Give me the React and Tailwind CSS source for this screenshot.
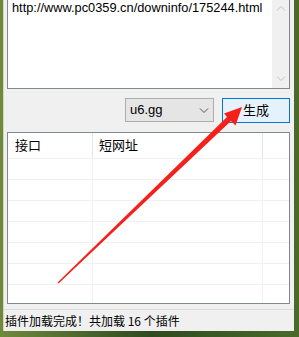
import React from "react";

const font = { fontFamily: '"Liberation Sans", "Noto Sans CJK SC", sans-serif' };

function Chevron({ dir = "down", className = "" }) {
  const d = dir === "down" ? "M1 1.5 L5 5.5 L9 1.5" : "M1 5.5 L5 1.5 L9 5.5";
  return (
    <svg width="10" height="7" viewBox="0 0 10 7" className={className}>
      <path d={d} fill="none" stroke="currentColor" strokeWidth="1" />
    </svg>
  );
}

export default function App() {
  const rows = [0, 1, 2, 3, 4, 5, 6];
  return (
    <div
      className="relative w-[299px] h-[337px] overflow-hidden bg-[linear-gradient(90deg,#6f8a3a_0%,#2f4a20_50%,#4a6a2a_100%)] text-[12px] text-black"
      style={font}
    >
      <div className="ml-[3px] w-[291px] h-[331px] bg-[#f0f0f0] flex flex-col border-l border-[#cfd6c4]">
        {/* textarea */}
        <div className="mt-[-4px] ml-[3px] mr-[4px] h-[93px] border border-[#828790] bg-white flex">
          <div className="flex-1 pl-[4px] pt-[3px] text-[12.8px] leading-[15px] text-[#000]">
            http://www.pc0359.cn/downinfo/175244.html
          </div>
          <div className="w-[17px] bg-[#f0f0f0] flex flex-col items-center justify-between pt-[8px] pb-[6px] text-[#c2c2c2]">
            <Chevron dir="up" />
            <Chevron dir="down" />
          </div>
        </div>

        {/* controls */}
        <div className="mt-[9px] flex justify-end items-start gap-[8px] pr-[4px]">
          <div className="w-[89px] h-[24px] border border-[#adadad] bg-[#e5e5e5] flex items-center justify-between pl-[4px] pr-[4px] text-[13px]">
            <span>u6.gg</span>
            <Chevron dir="down" className="text-[#555]" />
          </div>
          <div className="w-[68px] h-[25px] border border-[#0078d7] bg-[#e5f1fb] flex items-center justify-center text-[13px]">
            生成
          </div>
        </div>

        {/* list */}
        <div className="mt-[9px] ml-[3px] mr-[4px] h-[172px] border border-[#828790] bg-white flex flex-col overflow-hidden">
          <div className="h-[25px] flex shrink-0 text-[13px]">
            <div className="w-[85px] pl-[7px] flex items-center border-r border-[#e5e5e5]">接口</div>
            <div className="w-[170px] pl-[6px] flex items-center border-r border-[#e5e5e5]">短网址</div>
            <div className="flex-1" />
          </div>
          {rows.map((r) => (
            <div key={r} className="h-[21px] shrink-0 flex border-t border-[#f0f0f0]">
              <div className="w-[85px] border-r border-[#f0f0f0]" />
              <div className="w-[170px] border-r border-[#f0f0f0]" />
              <div className="flex-1" />
            </div>
          ))}
        </div>

        <div className="flex-1" />
        {/* status bar */}
        <div className="h-[22px] border-t border-[#dcdcdc] flex items-center pl-[1px] text-[12px]" style={{ fontFamily: '"Noto Sans CJK SC", sans-serif' }}>
          插件加载完成！共加载 16 个插件
        </div>
      </div>

      {/* red arrow overlay */}
      <svg className="absolute left-0 top-0 pointer-events-none" width="299" height="337" viewBox="0 0 299 337">
        <polygon
          points="58.5,283.5 57.5,282.5 227,117 224,113.5 242,107 235.5,125.5 231,121"
          fill="#f5201a"
        />
      </svg>
    </div>
  );
}
